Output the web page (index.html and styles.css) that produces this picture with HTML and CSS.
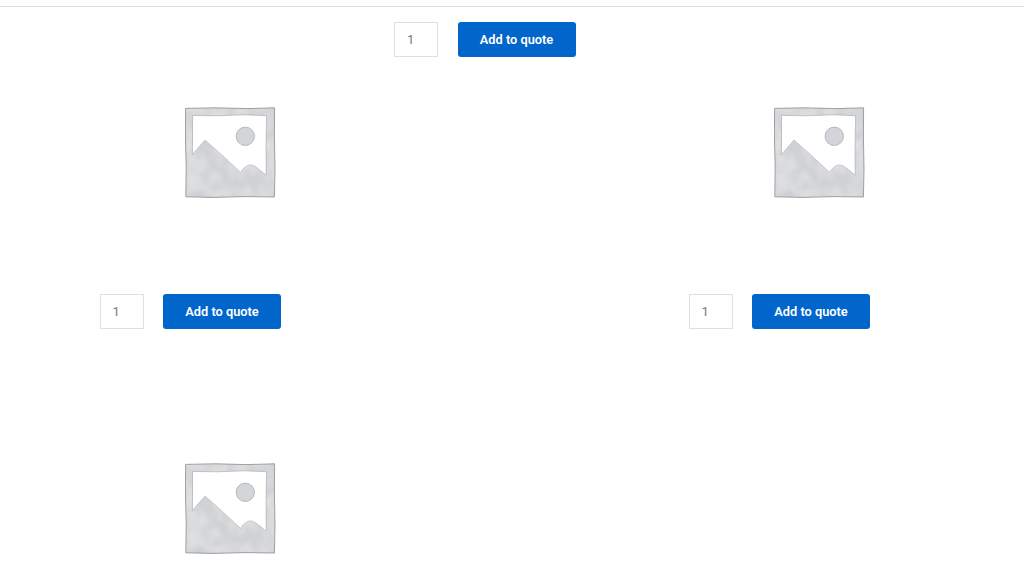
FILE: index.html
```html
<!DOCTYPE html>
<html lang="en">
<head>
    <meta charset="UTF-8">
    <meta name="viewport" content="width=device-width, initial-scale=1.0">
    <title>Products</title>
    <link rel="stylesheet" href="styles.css">
</head>
<body>
    <svg class="sprite" width="0" height="0" aria-hidden="true">
        <filter id="mottle" x="0" y="0" width="100%" height="100%">
            <feTurbulence type="fractalNoise" baseFrequency="0.06" numOctaves="2" seed="7"/>
            <feColorMatrix values="0 0 0 0 1  0 0 0 0 1  0 0 0 0 1  0.7 0 0 0 -0.22"/>
            <feComposite in2="SourceGraphic" operator="in"/>
            <feMerge>
                <feMergeNode in="SourceGraphic"/>
                <feMergeNode/>
            </feMerge>
            <feGaussianBlur stdDeviation="0.35"/>
        </filter>
        <filter id="soft" x="-5%" y="-5%" width="110%" height="110%">
            <feGaussianBlur stdDeviation="0.3"/>
        </filter>
        <symbol id="placeholder" viewBox="0 0 91 91">
            <!-- frame and hills, the white window is cut out of the frame -->
            <path fill="#cfd1d4" filter="url(#mottle)" fill-rule="evenodd" d="M0.6 1.4 L30 0.8 L62 1.6 L89.6 0.8 L89.4 30 L90 62 L89.4 90 L60 89.6 L28 90.4 L0.8 89.8 L1.2 60 L0.4 30 Z M7.6 8.4 L8 30 L7.4 47.6 L13 41 L20 33 L38 49 L55.6 65.4 C59 60 62 58 65.4 58 C70 58 74 62.6 76 63.4 C78 65 80 67 81.2 68.4 L81 40 L81.6 8.8 L60 7.8 L32 8.8 Z"/>
            <g fill="none" filter="url(#soft)">
                <path stroke="#94979b" stroke-width="0.9" d="M0.6 1.4 L30 0.8 L62 1.6 L89.6 0.8 L89.4 30 L90 62 L89.4 90 L60 89.6 L28 90.4 L0.8 89.8 L1.2 60 L0.4 30 Z"/>
                <path stroke="#a4a7ab" stroke-width="0.6" d="M7.4 47.6 L7.6 8.4 L32 8.8 L60 7.8 L81.6 8.8 L81 40 L81.2 68.4"/>
                <path stroke="#b0b3b7" stroke-width="0.6" d="M7.4 47.6 L20 33 L38 49 L55.6 65.4 C59 60 62 58 65.4 58 C70 58 74 62.6 81.2 68.4"/>
            </g>
            <circle cx="60.3" cy="29.3" r="9.2" fill="#d3d5d8" stroke="#a4a7ab" stroke-width="0.7" filter="url(#soft)"/>
        </symbol>
    </svg>

    <hr class="rule">

    <div class="products">
        <div class="product middle">
            <form class="cart">
                <input class="qty" type="text" value="1">
                <button class="add-button" type="button">Add to quote</button>
            </form>
        </div>

        <div class="product first">
            <svg class="thumb"><use href="#placeholder"/></svg>
            <form class="cart">
                <input class="qty" type="text" value="1">
                <button class="add-button" type="button">Add to quote</button>
            </form>
        </div>
        <div class="product last">
            <svg class="thumb"><use href="#placeholder"/></svg>
            <form class="cart">
                <input class="qty" type="text" value="1">
                <button class="add-button" type="button">Add to quote</button>
            </form>
        </div>

        <div class="product first">
            <svg class="thumb"><use href="#placeholder"/></svg>
        </div>
    </div>
</body>
</html>
```

FILE: styles.css
```css
:root {
    --primary-color: #0066cc;
    --border-color: #e0e0e0;
    --text-color: #777b7e;
}

html, body {
    height: 576px;
    overflow: hidden;
}

body {
    margin: 0;
    background-color: #ffffff;
    font-family: 'Roboto', sans-serif;
}

.sprite {
    display: block;
    height: 0;
}

.rule {
    height: 1px;
    margin: 6px 0 0;
    border: none;
    background-color: #dcdcdc;
}

.products {
    display: grid;
    grid-template-columns: repeat(3, 294.5px);
    padding: 15px 0 0 82.5px;
}

.product {
    display: flex;
    flex-direction: column;
    align-items: center;
}

.middle {
    grid-column: 2;
    height: 85px;
}

.first {
    grid-column: 1;
}

.last {
    grid-column: 3;
}

.thumb {
    display: block;
    width: 91px;
    height: 91px;
    margin: 0 0 0 1px;
}

.cart {
    display: flex;
    align-self: stretch;
    gap: 19.5px;
    margin-top: 96px;
    padding-left: 17px;
}

.middle .cart {
    margin-top: 0;
}

.first .cart, .last .cart {
    margin-bottom: 134px;
}

.qty {
    box-sizing: border-box;
    width: 44px;
    height: 35px;
    padding: 0 0 0 12px;
    border: 1px solid var(--border-color);
    border-radius: 0;
    color: var(--text-color);
    font-family: inherit;
    font-size: 13px;
}

.add-button {
    width: 118px;
    height: 35px;
    padding: 0;
    border: none;
    border-radius: 3px;
    background-color: var(--primary-color);
    color: white;
    font-family: inherit;
    font-size: 12.8px;
    font-weight: 600;
}
```
